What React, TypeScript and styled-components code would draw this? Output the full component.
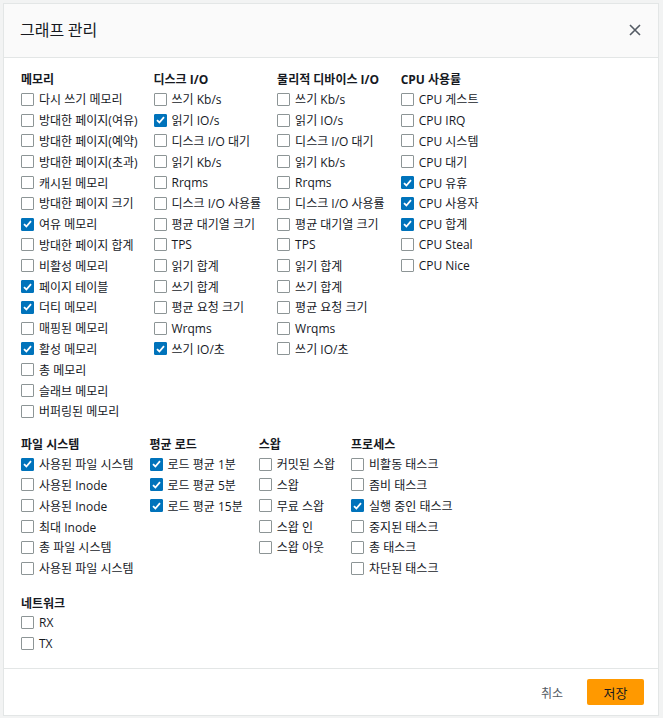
import React from "react";
import styled, { createGlobalStyle } from "styled-components";

const Global = createGlobalStyle`
  html, body { margin: 0; padding: 0; background: #f2f3f3; }
  body { font-family: "Open Sans", "Noto Sans CJK KR", sans-serif; color: #16191f; }
  * { box-sizing: border-box; }
`;

const Page = styled.div`
  padding: 3px 4px 2px 3px;
  height: 718px;
`;

const Modal = styled.div`
  background: #fff;
  border: 1px solid #e3e6e6;
  height: 713px;
  display: flex;
  flex-direction: column;
`;

const Header = styled.div`
  height: 54px;
  background: #fafafa;
  border-bottom: 1px solid #e3e6e6;
  display: flex;
  align-items: center;
  justify-content: space-between;
  padding: 0 14px 4px 16px;
`;

const Title = styled.h2`
  margin: 0;
  font-size: 16px;
  font-weight: 400;
  font-family: "Noto Sans CJK KR", sans-serif;
  color: #16191f;
`;

const Close = styled.button`
  border: none;
  background: none;
  padding: 0;
  width: 18px;
  height: 18px;
  display: flex;
  align-items: center;
  justify-content: center;
  margin-top: 3px;
`;

const Body = styled.div`
  flex: 1;
  padding: 12px 16px 0 17px;
  display: flex;
  flex-direction: column;
  gap: 13px;
`;

const SectionRow = styled.div<{ $extra?: number }>`
  display: flex;
  gap: 16px;
  align-items: flex-start;
  margin-top: ${(p) => p.$extra ?? 0}px;
`;

const Column = styled.div`
  display: flex;
  flex-direction: column;
`;

const Heading = styled.div`
  font-size: 12px;
  font-weight: 700;
  line-height: 19px;
  white-space: nowrap;
`;

const Item = styled.label`
  display: flex;
  align-items: center;
  gap: 5px;
  height: 20.8px;
  font-size: 12px;
  white-space: nowrap;
  color: #16191f;
`;

const Box = styled.span<{ $checked: boolean }>`
  width: 13px;
  height: 13px;
  flex: none;
  border: 1px solid ${(p) => (p.$checked ? "#0073bb" : "#8d9596")};
  background: ${(p) => (p.$checked ? "#0073bb" : "#fff")};
  border-radius: 1px;
  display: flex;
  align-items: center;
  justify-content: center;
`;

const Footer = styled.div`
  height: 47px;
  border-top: 1px solid #e3e6e6;
  display: flex;
  align-items: center;
  justify-content: flex-end;
  padding: 0 14px 0 0;
  gap: 12px;
`;

const LinkButton = styled.button`
  border: none;
  background: none;
  font-family: "Noto Sans CJK KR", sans-serif;
  font-size: 12px;
  color: #545b64;
  padding: 0 12px;
  height: 26px;
`;

const Primary = styled.button`
  border: none;
  background: #ff9900;
  border-radius: 2px;
  font-family: "Noto Sans CJK KR", sans-serif;
  font-size: 13px;
  color: #16191f;
  width: 57px;
  height: 26px;
  padding: 0;
`;

type Opt = [string, boolean?];
type Group = { title: string; items: Opt[] };

const sections: Group[][] = [
  [
    {
      title: "메모리",
      items: [
        ["다시 쓰기 메모리"],
        ["방대한 페이지(여유)"],
        ["방대한 페이지(예약)"],
        ["방대한 페이지(초과)"],
        ["캐시된 메모리"],
        ["방대한 페이지 크기"],
        ["여유 메모리", true],
        ["방대한 페이지 합계"],
        ["비활성 메모리"],
        ["페이지 테이블", true],
        ["더티 메모리", true],
        ["매핑된 메모리"],
        ["활성 메모리", true],
        ["총 메모리"],
        ["슬래브 메모리"],
        ["버퍼링된 메모리"],
      ],
    },
    {
      title: "디스크 I/O",
      items: [
        ["쓰기 Kb/s"],
        ["읽기 IO/s", true],
        ["디스크 I/O 대기"],
        ["읽기 Kb/s"],
        ["Rrqms"],
        ["디스크 I/O 사용률"],
        ["평균 대기열 크기"],
        ["TPS"],
        ["읽기 합계"],
        ["쓰기 합계"],
        ["평균 요청 크기"],
        ["Wrqms"],
        ["쓰기 IO/초", true],
      ],
    },
    {
      title: "물리적 디바이스 I/O",
      items: [
        ["쓰기 Kb/s"],
        ["읽기 IO/s"],
        ["디스크 I/O 대기"],
        ["읽기 Kb/s"],
        ["Rrqms"],
        ["디스크 I/O 사용률"],
        ["평균 대기열 크기"],
        ["TPS"],
        ["읽기 합계"],
        ["쓰기 합계"],
        ["평균 요청 크기"],
        ["Wrqms"],
        ["쓰기 IO/초"],
      ],
    },
    {
      title: "CPU 사용률",
      items: [
        ["CPU 게스트"],
        ["CPU IRQ"],
        ["CPU 시스템"],
        ["CPU 대기"],
        ["CPU 유휴", true],
        ["CPU 사용자", true],
        ["CPU 합계", true],
        ["CPU Steal"],
        ["CPU Nice"],
      ],
    },
  ],
  [
    {
      title: "파일 시스템",
      items: [
        ["사용된 파일 시스템", true],
        ["사용된 Inode"],
        ["사용된 Inode"],
        ["최대 Inode"],
        ["총 파일 시스템"],
        ["사용된 파일 시스템"],
      ],
    },
    {
      title: "평균 로드",
      items: [
        ["로드 평균 1분", true],
        ["로드 평균 5분", true],
        ["로드 평균 15분", true],
      ],
    },
    {
      title: "스왑",
      items: [["커밋된 스왑"], ["스왑"], ["무료 스왑"], ["스왑 인"], ["스왑 아웃"]],
    },
    {
      title: "프로세스",
      items: [
        ["비활동 태스크"],
        ["좀비 태스크"],
        ["실행 중인 태스크", true],
        ["중지된 태스크"],
        ["총 태스크"],
        ["차단된 태스크"],
      ],
    },
  ],
  [
    {
      title: "네트워크",
      items: [["RX"], ["TX"]],
    },
  ],
];

const Check = () => (
  <svg width="9" height="8" viewBox="0 0 9 8">
    <path d="M1 4.2 L3.4 6.5 L8 1.2" fill="none" stroke="#fff" strokeWidth="1.8" />
  </svg>
);

const Checkbox = ({ label, checked }: { label: string; checked?: boolean }) => (
  <Item>
    <Box $checked={!!checked}>{checked && <Check />}</Box>
    <span>{label}</span>
  </Item>
);

export default function App() {
  return (
    <>
      <Global />
      <Page>
        <Modal>
          <Header>
            <Title>그래프 관리</Title>
            <Close aria-label="닫기">
              <svg width="12" height="12" viewBox="0 0 12 12">
                <path d="M1 1 L11 11 M11 1 L1 11" stroke="#545b64" strokeWidth="1.6" />
              </svg>
            </Close>
          </Header>
          <Body>
            {sections.map((row, i) => (
              <SectionRow key={i} $extra={i === 2 ? 2 : 0}>
                {row.map((g) => (
                  <Column key={g.title}>
                    <Heading>{g.title}</Heading>
                    {g.items.map(([label, c], j) => (
                      <Checkbox key={j} label={label} checked={c} />
                    ))}
                  </Column>
                ))}
              </SectionRow>
            ))}
          </Body>
          <Footer>
            <LinkButton>취소</LinkButton>
            <Primary>저장</Primary>
          </Footer>
        </Modal>
      </Page>
    </>
  );
}
